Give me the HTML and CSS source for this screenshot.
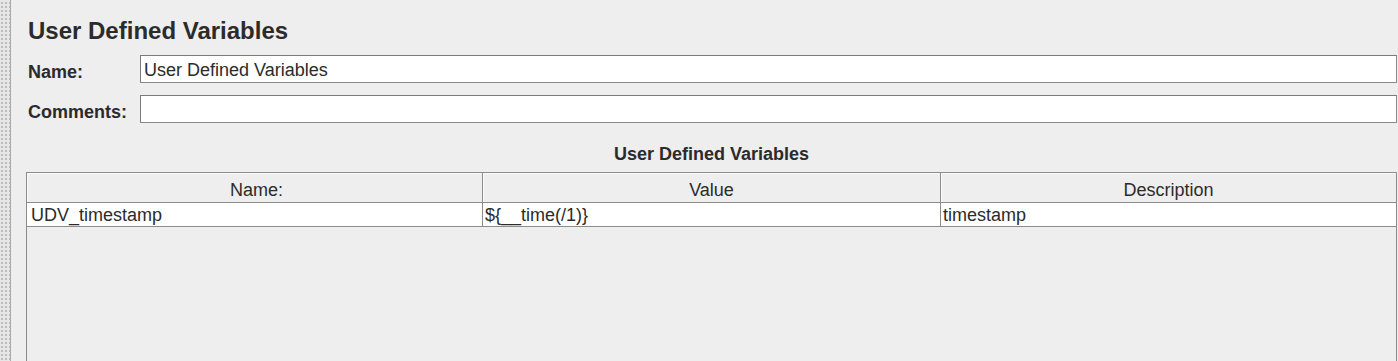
FILE: index.html
```html
<!DOCTYPE html>
<html lang="en">
<head>
    <meta charset="UTF-8">
    <meta name="viewport" content="width=device-width, initial-scale=1.0">
    <title>User Defined Variables</title>
    <link rel="stylesheet" href="styles.css">
</head>
<body>
    <div class="splitter"></div>
    <div class="panel">
        <h1>User Defined Variables</h1>
        <div class="field">
            <label for="name">Name:</label>
            <input id="name" type="text" value="User Defined Variables">
        </div>
        <div class="field">
            <label for="comments">Comments:</label>
            <input id="comments" type="text" value="">
        </div>

        <h2>User Defined Variables</h2>
        <div class="vars">
            <div class="row head">
                <div class="cell">Name:</div>
                <div class="cell">Value</div>
                <div class="cell">Description</div>
            </div>
            <div class="row">
                <div class="cell">UDV_timestamp</div>
                <div class="cell">${__time(/1)}</div>
                <div class="cell">timestamp</div>
            </div>
        </div>
    </div>
</body>
</html>
```

FILE: styles.css
```css
html, body {
    height: 100%;
}
body {
    margin: 0;
    display: flex;
    overflow: hidden;
    font-family: 'Liberation Sans', Arial, sans-serif;
    background-color: #eeeeee;
    color: #2b2b2b;
}
.splitter {
    width: 10px;
    flex: none;
    background-color: #e6e6e6;
    background-image: radial-gradient(circle, #bcbcbc 0.8px, transparent 1px);
    background-size: 4px 4px;
    background-position: 0 1px;
    border-right: 1px solid #a8a8a8;
}
.panel {
    flex: 1;
    padding: 0 1px 0 15px;
}
h1 {
    margin: 17px 0 10px 2px;
    font-size: 24px;
    line-height: 28px;
    font-weight: bold;
}
.field {
    display: flex;
    align-items: center;
    margin: 0 0 12px 2px;
}
.field label {
    width: 112px;
    flex: none;
    padding-top: 6px;
    font-size: 18px;
    font-weight: bold;
}
.field input {
    flex: 1;
    height: 28px;
    box-sizing: border-box;
    margin: 0;
    padding: 3px 3px 0;
    border: 1px solid #8a8a8a;
    border-top-color: #7a7a7a;
    border-left-color: #7a7a7a;
    background: #fff;
    font-family: inherit;
    font-size: 18px;
    color: #2b2b2b;
    outline: none;
}
h2 {
    margin: 20px 0 7px 0;
    text-align: center;
    font-size: 18px;
    line-height: 22px;
    font-weight: bold;
}
.vars {
    height: 200px;
    border: 1px solid #8c8c8c;
    background-color: #eeeeee;
}
.row {
    display: grid;
    grid-template-columns: 455px 458px 1fr;
    border-bottom: 1px solid #8c8c8c;
    background-color: #fff;
    font-size: 18px;
}
.row.head {
    background-color: #eeeeee;
}
.cell {
    height: 23px;
    line-height: 25px;
    padding-left: 2px;
    white-space: nowrap;
    overflow: hidden;
}
.cell + .cell {
    border-left: 1px solid #8c8c8c;
}
.row .cell:first-child {
    padding-left: 4px;
}
.head .cell {
    height: 29px;
    line-height: 34px;
    text-align: center;
    padding: 0;
    box-shadow: inset 1px 1px 0 #fafafa;
}
```
